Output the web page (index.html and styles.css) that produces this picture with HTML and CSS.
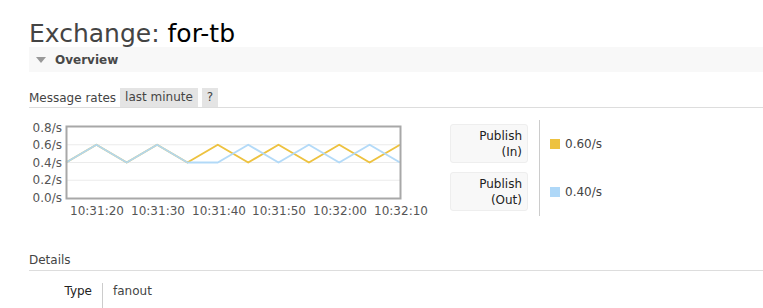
FILE: index.html
```html
<!DOCTYPE html>
<html lang="en">
<head>
	<meta charset="UTF-8" />
	<title>Exchange: for-tb</title>
	<link rel="stylesheet" href="styles.css">
</head>
<body>
	<div class="main">
		<h1>Exchange: <b>for-tb</b></h1>
		<div class="section">
			<h2 class="section-head"><span class="arrow"></span>Overview</h2>
			<div class="rates-head">
				<span>Message rates</span>
				<span class="chip">last minute</span>
				<span class="chip">?</span>
			</div>
			<div class="chart-row">
				<svg class="chart" width="400" height="104" viewBox="0 0 400 104">
					<line class="grid" x1="38" y1="26.75" x2="371" y2="26.75" />
					<line class="grid" x1="38" y1="44.5" x2="371" y2="44.5" />
					<line class="grid" x1="38" y1="62.25" x2="371" y2="62.25" />
					<polyline class="yellow" points="37,44.5 67.4,26.75 97.7,44.5 128.1,26.75 158.4,44.5 188.8,26.75 219.2,44.5 249.5,26.75 279.9,44.5 310.2,26.75 340.6,44.5 371,26.75" />
					<polyline class="blue" points="37,44.5 67.4,26.75 97.7,44.5 128.1,26.75 158.4,44.5 188.8,44.5 219.2,26.75 249.5,44.5 279.9,26.75 310.2,44.5 340.6,26.75 371,44.5" />
					<rect class="frame" x="37.5" y="8.5" width="334" height="72" />
					<g class="ylab">
						<text x="33" y="14">0.8/s</text>
						<text x="33" y="31">0.6/s</text>
						<text x="33" y="49">0.4/s</text>
						<text x="33" y="66">0.2/s</text>
						<text x="33" y="84">0.0/s</text>
					</g>
					<g class="xlab">
						<text x="68" y="97">10:31:20</text>
						<text x="129" y="97">10:31:30</text>
						<text x="190" y="97">10:31:40</text>
						<text x="250" y="97">10:31:50</text>
						<text x="311" y="97">10:32:00</text>
						<text x="372" y="97">10:32:10</text>
					</g>
				</svg>
				<div class="legend">
					<div class="legend-keys">
						<div class="legend-key">Publish<br>(In)</div>
						<div class="legend-key">Publish<br>(Out)</div>
					</div>
					<div class="legend-values">
						<div class="legend-value"><span class="swatch swatch-in"></span>0.60/s</div>
						<div class="legend-value"><span class="swatch swatch-out"></span>0.40/s</div>
					</div>
				</div>
			</div>
		</div>
		<div class="section">
			<h3 class="details-head">Details</h3>
			<table class="facts">
				<tr>
					<th>Type</th>
					<td>fanout</td>
				</tr>
			</table>
		</div>
	</div>
</body>
</html>
```

FILE: styles.css
```css
body {
	margin: 0;
	font-family: Verdana, "DejaVu Sans", sans-serif;
	font-size: 12px;
	color: #444;
	background: #fff;
}
.main {
	padding-left: 29px;
}
h1 {
	margin: 0;
	padding-top: 18px;
	height: 29px;
	font-size: 25px;
	font-weight: normal;
	line-height: 31px;
	color: #444;
}
h1 b {
	font-weight: normal;
	color: #000;
}
.section-head {
	display: flex;
	align-items: center;
	margin: 0;
	height: 25px;
	padding-left: 7px;
	background: #f8f8f8;
	font-size: 12px;
	font-weight: bold;
	color: #484848;
}
.arrow {
	width: 0;
	height: 0;
	margin-right: 9px;
	border-left: 5px solid transparent;
	border-right: 5px solid transparent;
	border-top: 6px solid #999;
}
.rates-head {
	display: flex;
	align-items: center;
	gap: 4px;
	margin-top: 16px;
	height: 19px;
	border-bottom: 1px solid #ddd;
}
.chip {
	background: #e4e4e4;
	padding: 0 5px;
	line-height: 19px;
}
.chart-row {
	display: flex;
	margin-top: 10px;
}
.chart {
	display: block;
}
.grid {
	stroke: #ebebeb;
	stroke-width: 1;
}
.frame {
	fill: none;
	stroke: #a8a8a8;
	stroke-width: 2;
}
.yellow, .blue {
	fill: none;
	stroke-width: 2;
	stroke-linejoin: round;
}
.yellow {
	stroke: #edc240;
}
.blue {
	stroke: #afd8f8;
	opacity: 0.95;
}
.ylab text {
	font-size: 12px;
	fill: #555;
	text-anchor: end;
}
.xlab text {
	font-size: 12px;
	fill: #555;
	text-anchor: middle;
}
.legend {
	display: flex;
	margin-left: 21px;
	margin-top: 2px;
	height: 96px;
}
.legend-keys {
	display: flex;
	flex-direction: column;
	gap: 9px;
	padding-top: 4px;
	width: 78px;
}
.legend-key {
	box-sizing: border-box;
	height: 39px;
	padding: 3px 5px 0 0;
	background: #f8f8f8;
	border: 1px solid #eee;
	border-radius: 3px;
	text-align: right;
	line-height: 16px;
	color: #222;
}
.legend-values {
	display: flex;
	flex-direction: column;
	gap: 9px;
	padding-top: 4px;
	margin-left: 11px;
	padding-left: 10px;
	border-left: 1px solid #ccc;
}
.legend-value {
	display: flex;
	align-items: center;
	height: 39px;
}
.swatch {
	width: 10px;
	height: 10px;
	margin-right: 5px;
}
.swatch-in {
	background: #edc240;
}
.swatch-out {
	background: #afd8f8;
}
.details-head {
	margin: 28px 0 0;
	height: 20px;
	line-height: 20px;
	font-size: 12px;
	font-weight: normal;
	border-bottom: 1px solid #ddd;
}
.facts {
	border-collapse: collapse;
	margin-top: 12px;
}
.facts th {
	width: 63px;
	padding: 0 10px 0 0;
	text-align: right;
	font-weight: normal;
	color: #222;
	border-right: 1px solid #ccc;
	height: 26px;
	vertical-align: top;
	line-height: 16px;
}
.facts td {
	padding: 0 0 0 10px;
	vertical-align: top;
	line-height: 16px;
}
```
